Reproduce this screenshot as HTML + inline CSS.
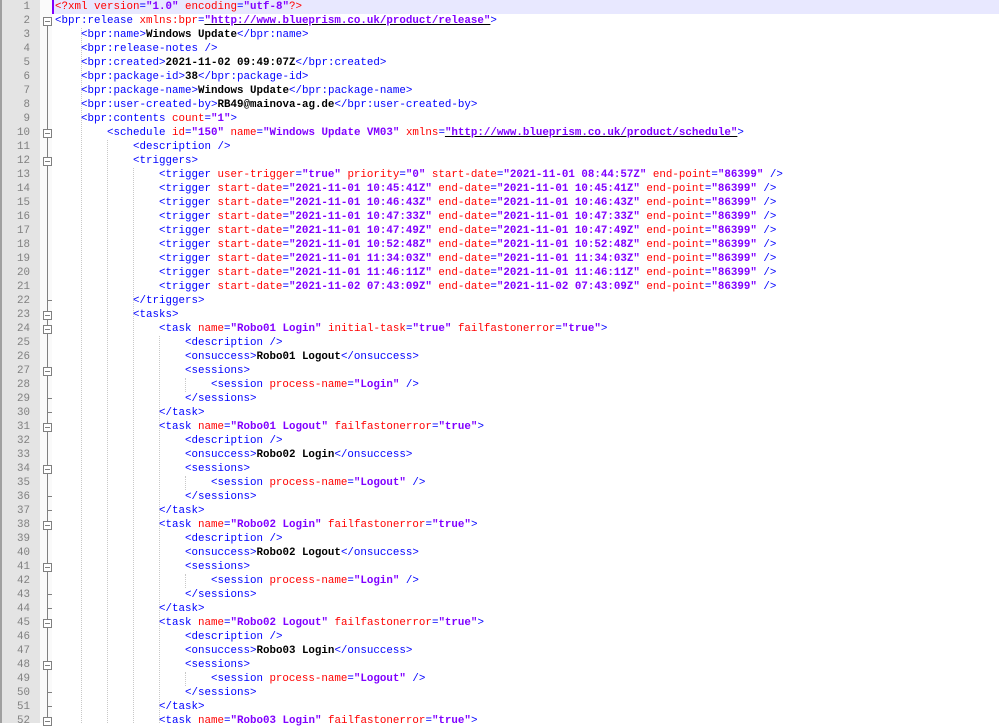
<!DOCTYPE html>
<html><head><meta charset="utf-8"><style>
body{margin:0;width:999px;height:723px;overflow:hidden;background:#fff;position:relative;font-family:"Liberation Mono","Courier New",monospace;font-size:10.83px}
#gut{position:absolute;left:0;top:0;width:40px;height:723px;background:#e4e4e4;border-left:2px solid #a0a0a0;box-sizing:border-box}
#fold{position:absolute;left:40px;top:0;width:12px;height:723px;background:#fafafa}
#fl{position:absolute;left:47px;top:21px;width:1px;height:702px;background:#808080}
.n{position:absolute;left:0;width:30px;text-align:right;color:#808080;height:14px;line-height:14px}
.l{position:absolute;left:55px;height:14px;line-height:14px;white-space:pre;color:#000}
.b{position:absolute;left:43px;width:7px;height:7px;border:1px solid #808080;background:#fff;box-sizing:content-box}
.b:after{content:"";position:absolute;left:1px;top:3px;width:5px;height:1px;background:#808080}
.k{position:absolute;left:48px;width:4px;height:1px;background:#808080}
.g{position:absolute;width:0;border-left:1px dotted #c8c8c8}
.t{color:#0000ff}.a{color:#ff0000}.v{color:#8000ff;font-weight:bold}.x{font-weight:bold}.u{color:#8000ff;font-weight:bold;text-decoration:underline;text-decoration-color:#000}
#hl{position:absolute;left:52px;top:0;width:947px;height:14px;background:#e8e8ff;border-left:2px solid #8000ff;box-sizing:border-box}
</style></head><body>
<div id="gut"></div><div id="fold"></div><div id="fl"></div><div id="hl"></div>
<div class="g" style="left:81px;top:28px;height:695px"></div>
<div class="g" style="left:107px;top:140px;height:583px"></div>
<div class="g" style="left:133px;top:168px;height:555px"></div>
<div class="g" style="left:159px;top:336px;height:387px"></div>
<div class="g" style="left:185px;top:378px;height:14px"></div>
<div class="g" style="left:185px;top:476px;height:14px"></div>
<div class="g" style="left:185px;top:574px;height:14px"></div>
<div class="g" style="left:185px;top:672px;height:14px"></div>

<div class="n" style="top:0">1</div><div class="n" style="top:14px">2</div><div class="n" style="top:28px">3</div><div class="n" style="top:42px">4</div><div class="n" style="top:56px">5</div><div class="n" style="top:70px">6</div><div class="n" style="top:84px">7</div><div class="n" style="top:98px">8</div><div class="n" style="top:112px">9</div><div class="n" style="top:126px">10</div><div class="n" style="top:140px">11</div><div class="n" style="top:154px">12</div><div class="n" style="top:168px">13</div><div class="n" style="top:182px">14</div><div class="n" style="top:196px">15</div><div class="n" style="top:210px">16</div><div class="n" style="top:224px">17</div><div class="n" style="top:238px">18</div><div class="n" style="top:252px">19</div><div class="n" style="top:266px">20</div><div class="n" style="top:280px">21</div><div class="n" style="top:294px">22</div><div class="n" style="top:308px">23</div><div class="n" style="top:322px">24</div><div class="n" style="top:336px">25</div><div class="n" style="top:350px">26</div><div class="n" style="top:364px">27</div><div class="n" style="top:378px">28</div><div class="n" style="top:392px">29</div><div class="n" style="top:406px">30</div><div class="n" style="top:420px">31</div><div class="n" style="top:434px">32</div><div class="n" style="top:448px">33</div><div class="n" style="top:462px">34</div><div class="n" style="top:476px">35</div><div class="n" style="top:490px">36</div><div class="n" style="top:504px">37</div><div class="n" style="top:518px">38</div><div class="n" style="top:532px">39</div><div class="n" style="top:546px">40</div><div class="n" style="top:560px">41</div><div class="n" style="top:574px">42</div><div class="n" style="top:588px">43</div><div class="n" style="top:602px">44</div><div class="n" style="top:616px">45</div><div class="n" style="top:630px">46</div><div class="n" style="top:644px">47</div><div class="n" style="top:658px">48</div><div class="n" style="top:672px">49</div><div class="n" style="top:686px">50</div><div class="n" style="top:700px">51</div><div class="n" style="top:714px">52</div>

<div class="b" style="top:17px"></div><div class="b" style="top:129px"></div><div class="b" style="top:157px"></div><div class="b" style="top:311px"></div><div class="b" style="top:325px"></div><div class="b" style="top:367px"></div><div class="b" style="top:423px"></div><div class="b" style="top:465px"></div><div class="b" style="top:521px"></div><div class="b" style="top:563px"></div><div class="b" style="top:619px"></div><div class="b" style="top:661px"></div><div class="b" style="top:717px"></div>
<div class="k" style="top:300px"></div><div class="k" style="top:398px"></div><div class="k" style="top:412px"></div><div class="k" style="top:496px"></div><div class="k" style="top:510px"></div><div class="k" style="top:594px"></div><div class="k" style="top:608px"></div><div class="k" style="top:692px"></div><div class="k" style="top:706px"></div>

<div class="l" style="top:0"><span class="a">&lt;?xml version</span><span class="t">=</span><span class="v">"1.0"</span> <span class="a">encoding</span><span class="t">=</span><span class="v">"utf-8"</span><span class="a">?&gt;</span></div>
<div class="l" style="top:14px"><span class="t">&lt;bpr:release </span><span class="a">xmlns:bpr</span><span class="t">=</span><span class="u">"http://www.blueprism.co.uk/product/release"</span><span class="t">&gt;</span></div>
<div class="l" style="top:28px">    <span class="t">&lt;bpr:name&gt;</span><span class="x">Windows Update</span><span class="t">&lt;/bpr:name&gt;</span></div>
<div class="l" style="top:42px">    <span class="t">&lt;bpr:release-notes /&gt;</span></div>
<div class="l" style="top:56px">    <span class="t">&lt;bpr:created&gt;</span><span class="x">2021-11-02 09:49:07Z</span><span class="t">&lt;/bpr:created&gt;</span></div>
<div class="l" style="top:70px">    <span class="t">&lt;bpr:package-id&gt;</span><span class="x">38</span><span class="t">&lt;/bpr:package-id&gt;</span></div>
<div class="l" style="top:84px">    <span class="t">&lt;bpr:package-name&gt;</span><span class="x">Windows Update</span><span class="t">&lt;/bpr:package-name&gt;</span></div>
<div class="l" style="top:98px">    <span class="t">&lt;bpr:user-created-by&gt;</span><span class="x">RB49@mainova-ag.de</span><span class="t">&lt;/bpr:user-created-by&gt;</span></div>
<div class="l" style="top:112px">    <span class="t">&lt;bpr:contents </span><span class="a">count</span><span class="t">=</span><span class="v">"1"</span><span class="t">&gt;</span></div>
<div class="l" style="top:126px">        <span class="t">&lt;schedule </span><span class="a">id</span><span class="t">=</span><span class="v">"150"</span> <span class="a">name</span><span class="t">=</span><span class="v">"Windows Update VM03"</span> <span class="a">xmlns</span><span class="t">=</span><span class="u">"http://www.blueprism.co.uk/product/schedule"</span><span class="t">&gt;</span></div>
<div class="l" style="top:140px">            <span class="t">&lt;description /&gt;</span></div>
<div class="l" style="top:154px">            <span class="t">&lt;triggers&gt;</span></div>
<div class="l" style="top:168px">                <span class="t">&lt;trigger </span><span class="a">user-trigger</span><span class="t">=</span><span class="v">"true"</span> <span class="a">priority</span><span class="t">=</span><span class="v">"0"</span> <span class="a">start-date</span><span class="t">=</span><span class="v">"2021-11-01 08:44:57Z"</span> <span class="a">end-point</span><span class="t">=</span><span class="v">"86399"</span><span class="t"> /&gt;</span></div>
<div class="l" style="top:182px">                <span class="t">&lt;trigger </span><span class="a">start-date</span><span class="t">=</span><span class="v">"2021-11-01 10:45:41Z"</span> <span class="a">end-date</span><span class="t">=</span><span class="v">"2021-11-01 10:45:41Z"</span> <span class="a">end-point</span><span class="t">=</span><span class="v">"86399"</span><span class="t"> /&gt;</span></div>
<div class="l" style="top:196px">                <span class="t">&lt;trigger </span><span class="a">start-date</span><span class="t">=</span><span class="v">"2021-11-01 10:46:43Z"</span> <span class="a">end-date</span><span class="t">=</span><span class="v">"2021-11-01 10:46:43Z"</span> <span class="a">end-point</span><span class="t">=</span><span class="v">"86399"</span><span class="t"> /&gt;</span></div>
<div class="l" style="top:210px">                <span class="t">&lt;trigger </span><span class="a">start-date</span><span class="t">=</span><span class="v">"2021-11-01 10:47:33Z"</span> <span class="a">end-date</span><span class="t">=</span><span class="v">"2021-11-01 10:47:33Z"</span> <span class="a">end-point</span><span class="t">=</span><span class="v">"86399"</span><span class="t"> /&gt;</span></div>
<div class="l" style="top:224px">                <span class="t">&lt;trigger </span><span class="a">start-date</span><span class="t">=</span><span class="v">"2021-11-01 10:47:49Z"</span> <span class="a">end-date</span><span class="t">=</span><span class="v">"2021-11-01 10:47:49Z"</span> <span class="a">end-point</span><span class="t">=</span><span class="v">"86399"</span><span class="t"> /&gt;</span></div>
<div class="l" style="top:238px">                <span class="t">&lt;trigger </span><span class="a">start-date</span><span class="t">=</span><span class="v">"2021-11-01 10:52:48Z"</span> <span class="a">end-date</span><span class="t">=</span><span class="v">"2021-11-01 10:52:48Z"</span> <span class="a">end-point</span><span class="t">=</span><span class="v">"86399"</span><span class="t"> /&gt;</span></div>
<div class="l" style="top:252px">                <span class="t">&lt;trigger </span><span class="a">start-date</span><span class="t">=</span><span class="v">"2021-11-01 11:34:03Z"</span> <span class="a">end-date</span><span class="t">=</span><span class="v">"2021-11-01 11:34:03Z"</span> <span class="a">end-point</span><span class="t">=</span><span class="v">"86399"</span><span class="t"> /&gt;</span></div>
<div class="l" style="top:266px">                <span class="t">&lt;trigger </span><span class="a">start-date</span><span class="t">=</span><span class="v">"2021-11-01 11:46:11Z"</span> <span class="a">end-date</span><span class="t">=</span><span class="v">"2021-11-01 11:46:11Z"</span> <span class="a">end-point</span><span class="t">=</span><span class="v">"86399"</span><span class="t"> /&gt;</span></div>
<div class="l" style="top:280px">                <span class="t">&lt;trigger </span><span class="a">start-date</span><span class="t">=</span><span class="v">"2021-11-02 07:43:09Z"</span> <span class="a">end-date</span><span class="t">=</span><span class="v">"2021-11-02 07:43:09Z"</span> <span class="a">end-point</span><span class="t">=</span><span class="v">"86399"</span><span class="t"> /&gt;</span></div>
<div class="l" style="top:294px">            <span class="t">&lt;/triggers&gt;</span></div>
<div class="l" style="top:308px">            <span class="t">&lt;tasks&gt;</span></div>
<div class="l" style="top:322px">                <span class="t">&lt;task </span><span class="a">name</span><span class="t">=</span><span class="v">"Robo01 Login"</span> <span class="a">initial-task</span><span class="t">=</span><span class="v">"true"</span> <span class="a">failfastonerror</span><span class="t">=</span><span class="v">"true"</span><span class="t">&gt;</span></div>
<div class="l" style="top:336px">                    <span class="t">&lt;description /&gt;</span></div>
<div class="l" style="top:350px">                    <span class="t">&lt;onsuccess&gt;</span><span class="x">Robo01 Logout</span><span class="t">&lt;/onsuccess&gt;</span></div>
<div class="l" style="top:364px">                    <span class="t">&lt;sessions&gt;</span></div>
<div class="l" style="top:378px">                        <span class="t">&lt;session </span><span class="a">process-name</span><span class="t">=</span><span class="v">"Login"</span><span class="t"> /&gt;</span></div>
<div class="l" style="top:392px">                    <span class="t">&lt;/sessions&gt;</span></div>
<div class="l" style="top:406px">                <span class="t">&lt;/task&gt;</span></div>
<div class="l" style="top:420px">                <span class="t">&lt;task </span><span class="a">name</span><span class="t">=</span><span class="v">"Robo01 Logout"</span> <span class="a">failfastonerror</span><span class="t">=</span><span class="v">"true"</span><span class="t">&gt;</span></div>
<div class="l" style="top:434px">                    <span class="t">&lt;description /&gt;</span></div>
<div class="l" style="top:448px">                    <span class="t">&lt;onsuccess&gt;</span><span class="x">Robo02 Login</span><span class="t">&lt;/onsuccess&gt;</span></div>
<div class="l" style="top:462px">                    <span class="t">&lt;sessions&gt;</span></div>
<div class="l" style="top:476px">                        <span class="t">&lt;session </span><span class="a">process-name</span><span class="t">=</span><span class="v">"Logout"</span><span class="t"> /&gt;</span></div>
<div class="l" style="top:490px">                    <span class="t">&lt;/sessions&gt;</span></div>
<div class="l" style="top:504px">                <span class="t">&lt;/task&gt;</span></div>
<div class="l" style="top:518px">                <span class="t">&lt;task </span><span class="a">name</span><span class="t">=</span><span class="v">"Robo02 Login"</span> <span class="a">failfastonerror</span><span class="t">=</span><span class="v">"true"</span><span class="t">&gt;</span></div>
<div class="l" style="top:532px">                    <span class="t">&lt;description /&gt;</span></div>
<div class="l" style="top:546px">                    <span class="t">&lt;onsuccess&gt;</span><span class="x">Robo02 Logout</span><span class="t">&lt;/onsuccess&gt;</span></div>
<div class="l" style="top:560px">                    <span class="t">&lt;sessions&gt;</span></div>
<div class="l" style="top:574px">                        <span class="t">&lt;session </span><span class="a">process-name</span><span class="t">=</span><span class="v">"Login"</span><span class="t"> /&gt;</span></div>
<div class="l" style="top:588px">                    <span class="t">&lt;/sessions&gt;</span></div>
<div class="l" style="top:602px">                <span class="t">&lt;/task&gt;</span></div>
<div class="l" style="top:616px">                <span class="t">&lt;task </span><span class="a">name</span><span class="t">=</span><span class="v">"Robo02 Logout"</span> <span class="a">failfastonerror</span><span class="t">=</span><span class="v">"true"</span><span class="t">&gt;</span></div>
<div class="l" style="top:630px">                    <span class="t">&lt;description /&gt;</span></div>
<div class="l" style="top:644px">                    <span class="t">&lt;onsuccess&gt;</span><span class="x">Robo03 Login</span><span class="t">&lt;/onsuccess&gt;</span></div>
<div class="l" style="top:658px">                    <span class="t">&lt;sessions&gt;</span></div>
<div class="l" style="top:672px">                        <span class="t">&lt;session </span><span class="a">process-name</span><span class="t">=</span><span class="v">"Logout"</span><span class="t"> /&gt;</span></div>
<div class="l" style="top:686px">                    <span class="t">&lt;/sessions&gt;</span></div>
<div class="l" style="top:700px">                <span class="t">&lt;/task&gt;</span></div>
<div class="l" style="top:714px">                <span class="t">&lt;task </span><span class="a">name</span><span class="t">=</span><span class="v">"Robo03 Login"</span> <span class="a">failfastonerror</span><span class="t">=</span><span class="v">"true"</span><span class="t">&gt;</span></div>
</body></html>
